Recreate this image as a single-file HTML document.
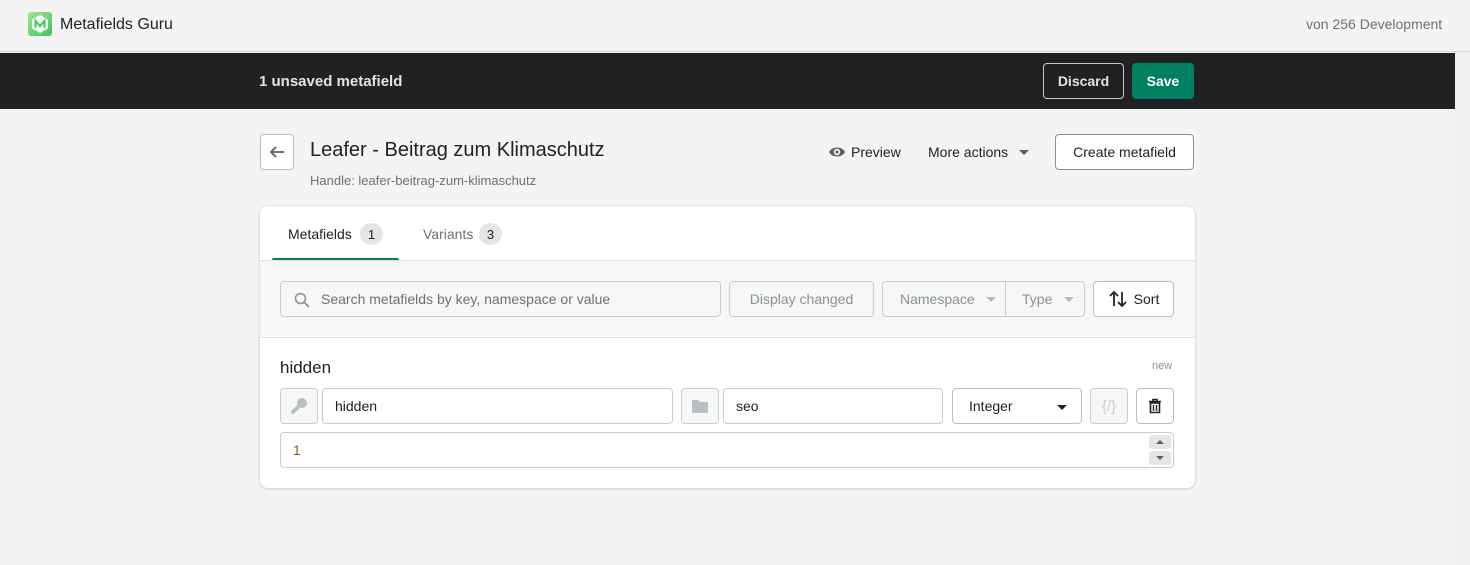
<!DOCTYPE html>
<html><head><meta charset="utf-8"><style>
*{box-sizing:border-box;margin:0;padding:0}
body{width:1470px;height:565px;background:#f4f4f4;font-family:"Liberation Sans",sans-serif;color:#202223;position:relative;overflow:hidden;font-size:14px}
.abs{position:absolute}
.btn{position:absolute;border:1px solid #8c9196;border-radius:4px;background:#fff;display:flex;align-items:center;justify-content:center;font-size:14px}
.in{position:absolute;border:1px solid #c9cccf;border-radius:4px;background:#fff;display:flex;align-items:center;padding-left:12px;font-size:14px}
</style></head><body>
<div class="abs" style="left:0;top:0;width:1470px;height:52px;background:#f4f4f4;border-bottom:1px solid #d6d6d6"></div>
<div class="abs" style="left:28px;top:12px;width:24px;height:24px;border-radius:3px;background:linear-gradient(135deg,#a6e38a,#3cc36a)">
<svg width="24" height="24" viewBox="0 0 24 24"><polygon points="12,3 20,7.5 20,16.5 12,21 4,16.5 4,7.5" fill="#fff" opacity=".9"/><path d="M7.5 15.5V9l4.5 5 4.5-5v6.5" stroke="#4cc96f" stroke-width="2.2" fill="none"/></svg></div>
<div class="abs" style="left:60px;top:16px;font-size:16px;color:#202223">Metafields Guru</div>
<div class="abs" style="left:1306px;top:16px;font-size:14px;color:#6d7175">von 256 Development</div>
<div class="abs" style="left:0;top:53px;width:1455px;height:56px;background:#202123"></div>
<div class="abs" style="left:1455px;top:53px;width:15px;height:512px;background:#f1f1f1"></div>
<div class="abs" style="left:259px;top:73px;font-size:15px;font-weight:bold;color:#e3e3e3">1 unsaved metafield</div>
<div class="abs" style="left:1043px;top:63px;width:81px;height:36px;border:1px solid #c9cccf;border-radius:4px;color:#e3e3e3;font-weight:bold;display:flex;align-items:center;justify-content:center">Discard</div>
<div class="abs" style="left:1132px;top:63px;width:62px;height:36px;background:#008060;border-radius:4px;color:#fff;font-weight:bold;display:flex;align-items:center;justify-content:center">Save</div>
<div class="btn" style="left:260px;top:134px;width:34px;height:36px;border-color:#babfc3"><svg width="18" height="18" viewBox="0 0 18 18"><path d="M16 9H3M8 4L3 9l5 5" stroke="#5c5f62" stroke-width="1.8" fill="none"/></svg></div>
<div class="abs" style="left:310px;top:139px;font-size:20px;font-weight:500">Leafer - Beitrag zum Klimaschutz</div>
<div class="abs" style="left:310px;top:173px;font-size:13px;color:#6d7175">Handle: leafer-beitrag-zum-klimaschutz</div>
<svg class="abs" style="left:828px;top:144px" width="18" height="16" viewBox="0 0 18 16"><path d="M1 8C4 2 14 2 17 8 14 14 4 14 1 8z" fill="#5c5f62"/><circle cx="9" cy="8" r="3.2" fill="#fff"/><circle cx="9" cy="8" r="1.6" fill="#5c5f62"/></svg>
<div class="abs" style="left:851px;top:144px">Preview</div>
<div class="abs" style="left:928px;top:144px">More actions</div>
<div class="abs" style="left:1019px;top:150px;border-left:5px solid transparent;border-right:5px solid transparent;border-top:5px solid #5c5f62"></div>
<div class="btn" style="left:1055px;top:134px;width:139px;height:36px">Create metafield</div>
<div class="abs" style="left:260px;top:206px;width:935px;height:282px;background:#fff;border-radius:8px;box-shadow:0 0 0 1px rgba(63,63,68,.05),0 1px 3px rgba(63,63,68,.15);overflow:hidden">
 <div class="abs" style="left:28px;top:20px;color:#202223">Metafields</div>
 <div class="abs" style="left:100px;top:17px;width:23px;height:22px;border-radius:11px;background:#e4e5e7;font-size:13px;display:flex;align-items:center;justify-content:center">1</div>
 <div class="abs" style="left:12px;top:52px;width:127px;height:3px;background:#008060;border-radius:2px 2px 0 0"></div>
 <div class="abs" style="left:163px;top:20px;color:#6d7175">Variants</div>
 <div class="abs" style="left:219px;top:17px;width:23px;height:22px;border-radius:11px;background:#e4e5e7;font-size:13px;display:flex;align-items:center;justify-content:center">3</div>
 <div class="abs" style="left:0;top:54px;width:935px;height:78px;background:#f6f7f7;border-top:1px solid #e1e3e5;border-bottom:1px solid #e1e3e5"></div>
 <div class="in" style="left:20px;top:75px;width:441px;height:36px;background:#f6f7f7;color:#6d7175;padding-left:40px"><svg class="abs" style="left:13px;top:10px" width="16" height="16" viewBox="0 0 16 16"><circle cx="6.5" cy="6.5" r="5" stroke="#8c9196" stroke-width="1.6" fill="none"/><path d="M10 10l5 5" stroke="#8c9196" stroke-width="1.8"/></svg>Search metafields by key, namespace or value</div>
 <div class="in" style="left:469px;top:75px;width:145px;height:36px;background:#f6f7f7;color:#8c9196;justify-content:center;padding:0;font-weight:500">Display changed</div>
 <div class="in" style="left:622px;top:75px;width:124px;height:36px;background:#f6f7f7;color:#8c9196;border-radius:4px 0 0 4px;padding-left:17px">Namespace<span style="margin-left:11px;border-left:5px solid transparent;border-right:5px solid transparent;border-top:5px solid #b5b9bd"></span></div>
 <div class="in" style="left:745px;top:75px;width:80px;height:36px;background:#f6f7f7;color:#8c9196;border-radius:0 4px 4px 0;padding-left:16px">Type<span style="margin-left:12px;border-left:5px solid transparent;border-right:5px solid transparent;border-top:5px solid #b5b9bd"></span></div>
 <div class="btn" style="left:833px;top:75px;width:81px;height:36px;border-color:#babfc3"><svg width="20" height="20" viewBox="0 0 20 20" style="margin-right:6px"><path d="M6 17V3M2 7l4-4 4 4M14 3v14M10 13l4 4 4-4" stroke="#202223" stroke-width="1.8" fill="none"/></svg>Sort</div>
 <div class="abs" style="left:20px;top:152px;font-size:17px;font-weight:500">hidden</div>
 <div class="abs" style="left:892px;top:154px;font-size:11px;color:#8c9196">new</div>
 <div class="in" style="left:20px;top:182px;width:38px;height:36px;background:#f6f7f7;padding:0;justify-content:center"><svg width="20" height="20" viewBox="0 0 20 20"><circle cx="13" cy="7" r="5" fill="#babfc3"/><path d="M10 10l-6 6" stroke="#babfc3" stroke-width="4" stroke-linecap="round"/></svg></div>
 <div class="in" style="left:62px;top:182px;width:351px;height:36px">hidden</div>
 <div class="in" style="left:421px;top:182px;width:38px;height:36px;background:#f6f7f7;padding:0;justify-content:center"><svg width="18" height="16" viewBox="0 0 18 16"><path d="M1 2h6l2 2h8v11H1z" fill="#babfc3"/></svg></div>
 <div class="in" style="left:463px;top:182px;width:220px;height:36px">seo</div>
 <div class="btn" style="left:692px;top:182px;width:130px;height:36px;border-color:#babfc3;justify-content:flex-start;padding-left:16px">Integer<span style="position:absolute;right:14px;top:16px;border-left:5px solid transparent;border-right:5px solid transparent;border-top:5px solid #202223"></span></div>
 <div class="in" style="left:830px;top:182px;width:38px;height:36px;background:#f6f7f7;padding:0;justify-content:center;color:#c9cccf;font-size:15px">{/}</div>
 <div class="btn" style="left:876px;top:182px;width:38px;height:36px;border-color:#babfc3"><svg width="16" height="16" viewBox="0 0 16 16"><path d="M2 3.5h12M6 3V1.5h4V3M3.5 5h9v9.5h-9z" stroke="#202223" stroke-width="1.6" fill="none"/><path d="M6.5 7v6M9.5 7v6" stroke="#202223" stroke-width="1.4"/></svg></div>
 <div class="in" style="left:20px;top:226px;width:894px;height:36px;color:#8a5a1a">1</div>
 <div class="abs" style="left:889px;top:229px;width:22px;height:14px;background:#e4e5e7;border-radius:3px"><span style="position:absolute;left:7px;top:5px;border-left:4px solid transparent;border-right:4px solid transparent;border-bottom:4px solid #5c5f62"></span></div>
 <div class="abs" style="left:889px;top:245px;width:22px;height:14px;background:#e4e5e7;border-radius:3px"><span style="position:absolute;left:7px;top:5px;border-left:4px solid transparent;border-right:4px solid transparent;border-top:4px solid #5c5f62"></span></div>
</div>
</body></html>
